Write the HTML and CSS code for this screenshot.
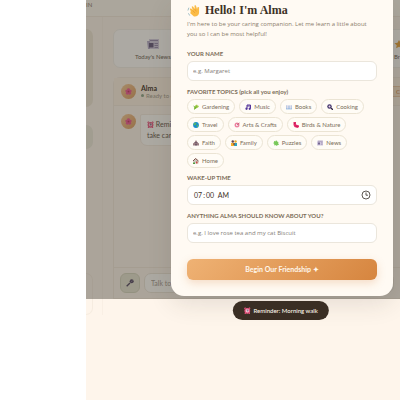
FILE: index.html
```
<!DOCTYPE html>
<html lang="en">
<head>
<meta charset="utf-8">
<meta name="viewport" content="width=device-width, initial-scale=1">
<title>Alma</title>
<link rel="stylesheet" href="styles.css">
</head>
<body>
<div class="app">
  <header class="topbar">IN</header>
  <div class="columns">
    <aside class="sidebar">
      <div class="side-card side-card-tall"></div>
      <div class="side-card side-card-short"></div>
      <div class="side-card side-card-last"></div>
    </aside>
    <main class="main">
      <div class="quick">
        <button type="button" class="quick-card">
          <svg class="quick-icon" viewBox="0 0 12 12"><path d="M2 1h10v10H2z" fill="#d3cbdf"/><path d="M0 3h3v8H1z" fill="#b1a8c6"/><path d="M3 2.500h8M7.500 5.500h3.500M7.500 7.500h3.500M7.500 9.500h3.500" stroke="#988cad"/><path d="M2 5h4.500v4.500H2z" fill="#62567b"/></svg>
          Today's News
        </button>
        <button type="button" class="quick-card quick-card-end">
          <svg class="quick-icon" viewBox="0 0 12 12"><path d="M6 2l1.500 2.800 3 .4-2.200 2 .6 3L6 8.700l-2.900 1.500.6-3-2.200-2 3-.4z" fill="#e9a33b"/></svg>
          Br
        </button>
      </div>
      <section class="chat">
        <div class="chat-head">
          <span class="avatar"><svg viewBox="0 0 12 12"><use href="#flower"/></svg></span>
          <div class="chat-who"><strong>Alma</strong><span class="status"><i class="dot"></i>Ready to chat</span></div>
          <button type="button" class="clear">C</button>
        </div>
        <div class="messages">
          <span class="avatar"><svg viewBox="0 0 12 12"><use href="#flower"/></svg></span>
          <p class="bubble"><svg class="emoji" viewBox="0 0 12 12"><use href="#alarm"/></svg> Reminder!<br>take care of it</p>
        </div>
        <form class="composer">
          <button type="button" class="mic" aria-label="Speak"><svg viewBox="0 0 12 12"><path d="M1 11L6 6" stroke="#51465f" stroke-width="2"/><circle cx="8.500" cy="3.500" r="3" fill="#51465f"/><path d="M7 2l3 3M10 2L7 5" stroke="#9b8fa8" stroke-width=".7"/></svg></button>
          <input class="talk" type="text" aria-label="Message" placeholder="Talk to Alma">
        </form>
      </section>
    </main>
  </div>

  <div class="overlay">
    <form class="modal" role="dialog" aria-labelledby="hello">
      <h1 class="title" id="hello"><svg class="wave" viewBox="0 0 14 14"><path d="M4 7.500L3 5.500l1.200-.8 2 1.800L5 3l1.300-.7 2 3L8 1.500l1.500-.2 1.300 4 .7-2L13 3.500v6c0 3-3 4.500-5.500 4L3.500 10l.3-1.300z" fill="#fbbb45"/><path d="M6 7l2.500 2.500M8.300 5.300L10 8" stroke="#e5952c" stroke-width=".7"/><path d="M1 7l1-3M1.500 10l1.500 2.500" stroke="#8fb4bf" stroke-width=".9" fill="none"/></svg>Hello! I'm Alma</h1>
      <p class="intro">I'm here to be your caring companion. Let me learn a little about you so I can be most helpful!</p>

      <label class="label" for="name">YOUR NAME</label>
      <input class="field" id="name" type="text" placeholder="e.g. Margaret">

      <fieldset class="topics">
        <legend class="label">FAVORITE TOPICS (pick all you enjoy)</legend>
        <div class="chips">
          <button type="button" class="chip"><svg viewBox="0 0 12 12"><path d="M2 11C1 6 4 3 8 1l1 2 3 1-2 3-4 2z" fill="#a0cb45"/><path d="M3 11l4-6M1 4l4 3" stroke="#56a339" stroke-width="1.500"/></svg>Gardening</button>
          <button type="button" class="chip"><svg viewBox="0 0 12 12"><path d="M4 9V2h7v7M4 4h7" fill="none" stroke="#54369c" stroke-width="2"/><circle cx="3" cy="9.500" r="2.300" fill="#54369c"/><circle cx="9.500" cy="9.500" r="2.300" fill="#54369c"/></svg>Music</button>
          <button type="button" class="chip"><svg viewBox="0 0 12 12"><path d="M0 2l6 1 6-1v8H0z" fill="#deddea"/><path d="M0 3v7h12V3M6 3v7" fill="none" stroke="#599bd7"/></svg>Books</button>
          <button type="button" class="chip"><svg viewBox="0 0 12 12"><circle cx="5" cy="5" r="4.500" fill="#41366b"/><circle cx="5" cy="5" r="2" fill="#f2d7ef"/><path d="M8 8l4 4" stroke="#312443" stroke-width="2.500"/></svg>Cooking</button>
          <button type="button" class="chip"><svg viewBox="0 0 12 12"><circle cx="6" cy="6" r="5.800" fill="#188bd1"/><path d="M2 2l4-1 1 3-3 3-3-1zM8 5l3 1-2 5-2-2z" fill="#54b36d"/></svg>Travel</button>
          <button type="button" class="chip"><svg viewBox="0 0 12 12"><circle cx="6" cy="6" r="5" fill="#f18daa"/><circle cx="6" cy="6" r="3" fill="#fff" stroke="#da426a"/><path d="M6 6l5-4" stroke="#b1465f" stroke-width="1.500"/></svg>Arts &amp; Crafts</button>
          <button type="button" class="chip"><svg viewBox="0 0 12 12"><path d="M1 0h5v5l6 2v3l-3 2-6-2-2-4z" fill="#e62869"/><path d="M2 3h2M5 8l4 1" stroke="#8c174b"/></svg>Birds &amp; Nature</button>
          <button type="button" class="chip"><svg viewBox="0 0 12 12"><path d="M6 0l3 5 3 2v4H0V7l3-2z" fill="#9b7e83"/><path d="M3 5h6M5 11V8h2v3" fill="none" stroke="#604b5f" stroke-width="1.300"/></svg>Faith</button>
          <button type="button" class="chip"><svg viewBox="0 0 12 12"><circle cx="3.500" cy="3" r="2.500" fill="#614353"/><circle cx="9" cy="3" r="2.500" fill="#e9ac32"/><path d="M0 6h6v6H0z" fill="#f2ae2d"/><path d="M6 6h6v6H6z" fill="#31a2bd"/><circle cx="6" cy="8" r="2" fill="#915535"/></svg>Family</button>
          <button type="button" class="chip"><svg viewBox="0 0 12 12"><path d="M2 2l3 1c0-3 4-2 3 0l3 1-1 3c3 0 2 4-1 3l-1 2-3-2c-1 2-4 0-2-2L0 6l2-1z" fill="#79c85a"/></svg>Puzzles</button>
          <button type="button" class="chip"><svg viewBox="0 0 12 12"><path d="M1 1h11v10H0V3h1z" fill="#cfc6dd"/><path d="M2 2.500h9M8 5.500h3M8 8.500h3" stroke="#887b9f"/><path d="M2 5h4v4H2z" fill="#756791"/></svg>News</button>
          <button type="button" class="chip"><svg viewBox="0 0 12 12"><path d="M0 6l5-5 6 5v5H2z" fill="#c9c5be"/><path d="M0 6l5-5 6 5" fill="none" stroke="#805146" stroke-width="2"/><path d="M6 7h3v4H6z" fill="#ce4941"/><path d="M0 9h4v3H0z" fill="#549c40"/></svg>Home</button>
        </div>
      </fieldset>

      <label class="label" for="wake">WAKE-UP TIME</label>
      <div class="time">
        <input class="field" id="wake" type="time" value="07:00">
        <svg class="clock" viewBox="0 0 10 10"><circle cx="5" cy="5" r="4" fill="none" stroke="#4c4640" stroke-width=".9"/><path d="M5 2.500V5.200h2" fill="none" stroke="#4c4640" stroke-width=".9"/></svg>
      </div>

      <label class="label" for="about">ANYTHING ALMA SHOULD KNOW ABOUT YOU?</label>
      <input class="field" id="about" type="text" placeholder="e.g. I love rose tea and my cat Biscuit">

      <button type="button" class="begin">Begin Our Friendship ✦</button>
    </form>
  </div>

  <div class="toast" role="status"><svg class="emoji" viewBox="0 0 12 12"><use href="#alarm"/></svg>Reminder: Morning walk</div>
</div>

<svg class="defs" aria-hidden="true">
  <symbol id="flower" viewBox="0 0 12 12"><g fill="#ef5794"><circle cx="6" cy="3" r="2.500"/><circle cx="9" cy="5.300" r="2.500"/><circle cx="8" cy="9" r="2.500"/><circle cx="4" cy="9" r="2.500"/><circle cx="3" cy="5.300" r="2.500"/></g><circle cx="6" cy="6.200" r="1.600" fill="#c3335f"/></symbol>
  <symbol id="alarm" viewBox="0 0 12 12"><path d="M1 3l2-2M11 3L9 1M3 10l-1 2M9 10l1 2" stroke="#e6527c" stroke-width="2"/><circle cx="6" cy="6.500" r="4" fill="#f3c5d4" stroke="#e8557f" stroke-width="2"/><path d="M6 4v3l2-1" fill="none" stroke="#554068"/></symbol>
</svg>
</body>
</html>
```
FILE: styles.css
```
* { box-sizing: border-box; }

body {
  margin: 0;
  background: #fff;
  color: #3d3226;
  font-family: Lato, "Liberation Sans", sans-serif;
  font-size: 7px;
}

button, input { font: inherit; color: inherit; margin: 0; }

.defs { position: absolute; width: 0; height: 0; }

.app {
  position: relative;
  margin-left: 86px;
  min-height: 100vh;
  overflow: hidden;
  background: #fef5eb;
}

.topbar {
  height: 17px;
  line-height: 10px;
  font-size: 6px;
  color: #8b7d6b;
  background: #fdf8ee;
  border-bottom: 1px solid #f3e8db;
}

.columns { display: grid; grid-template-columns: 16px minmax(0, 1fr); }

.sidebar {
  display: flex;
  flex-direction: column;
  gap: 18px;
  padding: 12px 9px 0 0;
}

.side-card { border-radius: 0 7px 7px 0; }
.side-card-tall { height: 78px; background: #eee6d5; }
.side-card-short { height: 24px; background: #ece8da; }
.side-card-last {
  height: 42px;
  margin-top: 106px;
  border: 1px solid #f6ece0;
  border-left: 0;
}

.main {
  padding: 12px 0 0 10px;
  border-left: 1px solid #f9efe4;
}

.quick { display: flex; justify-content: space-between; }

.quick-card {
  display: flex;
  flex: none;
  flex-direction: column;
  align-items: center;
  gap: 3px;
  width: 80px;
  height: 39px;
  padding: 8px 0 0;
  border: 1px solid #f1eee6;
  border-radius: 7px;
  background: #fffdfa;
  color: #6b6053;
  font-size: 6px;
  line-height: 8px;
  white-space: nowrap;
}

.quick-card-end {
  align-items: flex-end;
  width: 24px;
  border-right: 0;
  border-radius: 7px 0 0 7px;
}

.quick-icon { width: 12px; height: 12px; }
.quick-card-end .quick-icon { margin-right: -5px; }

.chat {
  margin-top: 9px;
  border: 1px solid #f3e8db;
  border-right: 0;
  border-radius: 7px 0 0 0;
}

.chat-head {
  display: flex;
  align-items: center;
  gap: 5px;
  height: 28px;
  padding-left: 7px;
  background: #fdf1e2;
  border-bottom: 1px solid #f3e8db;
}

.avatar {
  display: flex;
  flex: none;
  align-items: center;
  justify-content: center;
  width: 15px;
  height: 15px;
  border-radius: 50%;
  background: linear-gradient(135deg, #f6c995, #dc9b5e);
}

.avatar svg { width: 7px; height: 7px; }

.chat-who { flex: 1; display: flex; flex-direction: column; line-height: 8px; }
.status { display: flex; align-items: center; gap: 2px; font-size: 6px; color: #a39b8b; }
.dot { width: 3px; height: 3px; border-radius: 50%; background: #8ba487; }

.clear {
  height: 11px;
  padding: 0 0 0 5px;
  border: 1px solid #edc8a4;
  border-right: 0;
  border-radius: 3px 0 0 3px;
  background: #f9e3ca;
  color: #d18542;
  font-size: 6px;
  line-height: 8px;
}

.messages {
  display: flex;
  align-items: flex-start;
  gap: 4px;
  height: 161px;
  padding: 8px 7px;
}

.bubble {
  margin: 0;
  padding: 4px 6px;
  border: 1px solid #f3eadf;
  border-radius: 2px 7px 7px 7px;
  background: #fffdf8;
  color: #5f5548;
  line-height: 11px;
}

.emoji { width: 7px; height: 7px; vertical-align: -1px; }

.composer {
  display: flex;
  gap: 4px;
  padding: 5px 6px;
  border-top: 1px solid #f3e8db;
}

.mic {
  flex: none;
  width: 20px;
  height: 20px;
  padding: 5px;
  border: 1px solid #d5d4bd;
  border-radius: 6px;
  background: #e5e3d1;
}

.mic svg { display: block; width: 8px; height: 8px; }

.talk {
  flex: 1;
  min-width: 0;
  height: 20px;
  padding: 0 6px;
  border: 1px solid #ece5d8;
  border-radius: 7px;
  background: #fffdf9;
}

.talk::placeholder { color: #a69b90; }

/* Dialog */
.overlay {
  position: absolute;
  top: 0;
  left: 0;
  right: 0;
  padding: 0 7px 3px 85px;
  background: rgba(58, 53, 43, 0.42);
}

.modal {
  padding: 2px 16px 16px;
  border-radius: 0 0 13px 13px;
  background: #fffaf3;
  box-shadow: 0 8px 24px rgba(61, 50, 38, 0.12);
}

.title {
  display: flex;
  align-items: center;
  gap: 5px;
  margin: 0;
  font: bold 12px/16px "Liberation Serif", serif;
}

.wave { width: 13px; height: 13px; }

.intro {
  margin: 1px 0 10px;
  color: #8b7d6b;
  font-family: "Open Sans", sans-serif;
  font-size: 6px;
  line-height: 10px;
}

.label {
  display: block;
  margin-bottom: 2px;
  padding: 0;
  color: #7b6d59;
  font-size: 6px;
  font-weight: 700;
  line-height: 10px;
}

.field {
  display: block;
  width: 100%;
  height: 20px;
  margin-bottom: 6px;
  padding: 0 5px;
  border: 1px solid #ebe6dc;
  border-radius: 6px;
  background: #fff;
  font-family: "Open Sans", sans-serif;
  font-size: 6px;
}

.field::placeholder { color: #858079; }

.time { position: relative; }

.time .field { font-family: Lato, sans-serif; font-size: 7px; }

.clock {
  position: absolute;
  top: 5px;
  right: 6px;
  width: 10px;
  height: 10px;
  pointer-events: none;
}

.field::-webkit-datetime-edit { padding: 0; }
.field::-webkit-calendar-picker-indicator {
  width: 10px;
  height: 10px;
  padding: 0;
  margin: 0;
  opacity: 0;
}

.topics { margin: 0 0 5px; padding: 0; border: 0; min-width: 0; }

.chips { display: flex; flex-wrap: wrap; gap: 3px 4px; }

.chip {
  display: flex;
  align-items: center;
  gap: 3px;
  height: 15px;
  padding: 0 5px;
  border: 1px solid #ebe4d4;
  border-radius: 8px;
  background: #fffcf6;
  color: #7b6d59;
  font-size: 6px;
}

.chip svg { width: 6px; height: 6px; }

.begin {
  display: block;
  width: 100%;
  height: 21px;
  margin-top: 16px;
  padding: 0;
  border: 0;
  border-radius: 6px;
  background: linear-gradient(135deg, #efb274, #d6853f);
  box-shadow: 0 3px 9px rgba(214, 133, 63, 0.25);
  color: #fff8ec;
  font-weight: 700;
}

.toast {
  position: absolute;
  top: 301px;
  left: 62%;
  display: flex;
  align-items: center;
  gap: 3px;
  height: 19px;
  padding: 0 11px;
  border-radius: 10px;
  background: #3a2e24;
  color: #fff7eb;
  font-size: 6px;
  font-weight: 500;
  white-space: nowrap;
  transform: translateX(-50%);
}
```
